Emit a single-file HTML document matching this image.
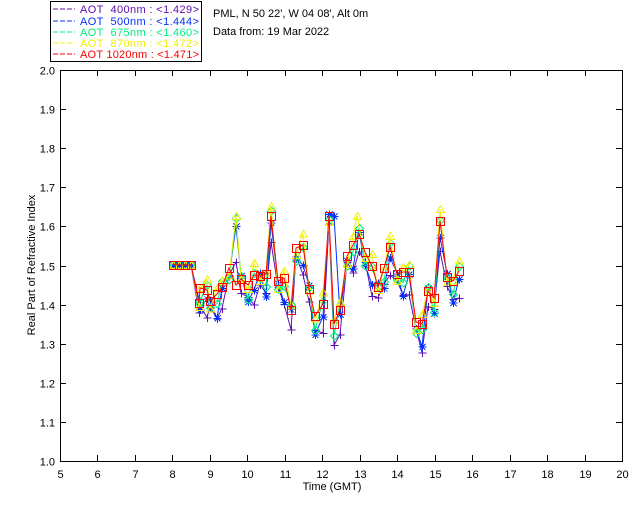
<!DOCTYPE html>
<html><head><meta charset="utf-8"><style>
html,body{margin:0;padding:0;background:#fff;}
body{width:640px;height:512px;position:relative;overflow:hidden;font-family:"Liberation Sans","DejaVu Sans",sans-serif;}
svg{position:absolute;left:0;top:0}
svg text{font-family:"Liberation Sans","DejaVu Sans",sans-serif;font-size:11px}
</style></head><body>
<svg id="s" width="640" height="512" viewBox="0 0 640 512" shape-rendering="crispEdges">
<rect x="50.5" y="1.5" width="151" height="60" fill="none" stroke="#000" stroke-width="1"/>
<g font-size="11">
<line x1="53" y1="9" x2="75" y2="9" stroke="#6010b0" stroke-dasharray="5,2"/>
<text x="80" y="13" fill="#6010b0" xml:space="preserve" textLength="119">AOT  400nm : &lt;1.429&gt;</text>
<line x1="53" y1="21" x2="75" y2="21" stroke="#0030ff" stroke-dasharray="5,2"/>
<text x="80" y="25" fill="#0030ff" xml:space="preserve" textLength="119">AOT  500nm : &lt;1.444&gt;</text>
<line x1="53" y1="32" x2="75" y2="32" stroke="#00ee80" stroke-dasharray="5,2"/>
<text x="80" y="36" fill="#00ee80" xml:space="preserve" textLength="119">AOT  675nm : &lt;1.460&gt;</text>
<line x1="53" y1="43" x2="75" y2="43" stroke="#f0f000" stroke-dasharray="5,2"/>
<text x="80" y="47" fill="#f0f000" xml:space="preserve" textLength="119">AOT  870nm : &lt;1.472&gt;</text>
<line x1="53" y1="54" x2="75" y2="54" stroke="#ff0000" stroke-dasharray="5,2"/>
<text x="80" y="58" fill="#ff0000" xml:space="preserve" textLength="119">AOT 1020nm : &lt;1.471&gt;</text>
</g>
<text x="213" y="17">PML, N 50 22', W 04 08', Alt 0m</text>
<text x="213" y="35">Data from: 19 Mar 2022</text>
<rect x="60.5" y="70.5" width="562" height="391" fill="none" stroke="#000"/>
<g id="ax" stroke="#000"></g>
<g id="lab"></g>
<text x="332" y="490" text-anchor="middle">Time (GMT)</text>
<text transform="translate(35,265) rotate(-90)" text-anchor="middle">Real Part of Refractive Index</text>
<g id="data"></g>
</svg>
<script>
var NS="http://www.w3.org/2000/svg";
function el(p,t,a){var e=document.createElementNS(NS,t);for(var k in a)e.setAttribute(k,a[k]);p.appendChild(e);return e;}
var ax=document.getElementById('ax'),lab=document.getElementById('lab');
for(var h=5;h<=20;h++){var x=Math.round(60+(h-5)*562/15)+0.5;
 if(h>5&&h<20){el(ax,'line',{x1:x,y1:461,x2:x,y2:455});el(ax,'line',{x1:x,y1:70,x2:x,y2:76});}
 var t=el(lab,'text',{x:x,y:478,'text-anchor':'middle'});t.textContent=h;}
for(var i=0;i<=10;i++){var y=Math.round(461-i*39.1)+0.5;
 if(i>0&&i<10){el(ax,'line',{x1:60,y1:y,x2:66,y2:y});el(ax,'line',{x1:622,y1:y,x2:616,y2:y});}
 var t=el(lab,'text',{x:55,y:y+4,'text-anchor':'end'});t.textContent=(1+i/10).toFixed(1);}
var R=[[173,265],[179,265],[185,265],[191,265],[199,303],[200,288],[207,290],[210,301],[217,294],[222,287],[229,268],[236,285],[241,279],[248,285],[254,275],[260,276],[266,274],[271,216],[278,281],[284,278],[291,310],[296,248],[303,245],[309,289],[315,316],[323,304],[329,216],[334,324],[340,310],[347,256],[353,245],[359,234],[365,252],[372,266],[378,287],[384,268],[390,247],[397,274],[403,272],[409,272],[416,322],[422,324],[428,291],[434,298],[440,221],[447,277],[453,281],[459,271]];
function ser(off,amp,seed){return R.map(function(p,i){var n=Math.sin(i*2.3+seed)*amp;return [p[0],Math.min(461,p[1]+(i<4?0:off+n))];});}
var S=[
 {c:'#6010b0',d:ser(18,12,1),m:'plus'},
 {c:'#0030ff',d:ser(10,14,2),m:'star'},
 {c:'#00ee80',d:ser(4,10,3),m:'dia'},
 {c:'#f0f000',d:ser(-2,10,4),m:'tri'},
 {c:'#ff0000',d:R,m:'sq'}];
S[3].d[11]=[236,216];S[2].d[11]=[236,218];S[1].d[11]=[236,226];S[0].d[11]=[236,262];
S[3].d[31]=[357,216];S[2].d[31]=[359,228];
S[1].d[27]=[334,216];
var g=document.getElementById('data');
S.forEach(function(s){
 el(g,'polyline',{points:s.d.map(function(p){return p.join(',')}).join(' '),fill:'none',stroke:s.c,'stroke-width':1,'shape-rendering':'auto'});
 s.d.forEach(function(p){var x=p[0]+.5,y=p[1]+.5;
  if(s.m=='sq')el(g,'rect',{x:x-4,y:y-4,width:8,height:8,fill:'none',stroke:s.c});
  else if(s.m=='plus')el(g,'path',{d:'M'+(x-4)+' '+y+'h8M'+x+' '+(y-4)+'v8',stroke:s.c,fill:'none'});
  else if(s.m=='star')el(g,'path',{d:'M'+(x-4)+' '+y+'h8M'+x+' '+(y-4)+'v8M'+(x-3)+' '+(y-3)+'l6 6M'+(x-3)+' '+(y+3)+'l6 -6',stroke:s.c,fill:'none'});
  else if(s.m=='dia')el(g,'path',{d:'M'+x+' '+(y-4)+'l4 4l-4 4l-4 -4z',stroke:s.c,fill:'none'});
  else el(g,'path',{d:'M'+x+' '+(y-4)+'l4 7h-8z',stroke:s.c,fill:'none'});
 });
});
</script>
</body></html>
